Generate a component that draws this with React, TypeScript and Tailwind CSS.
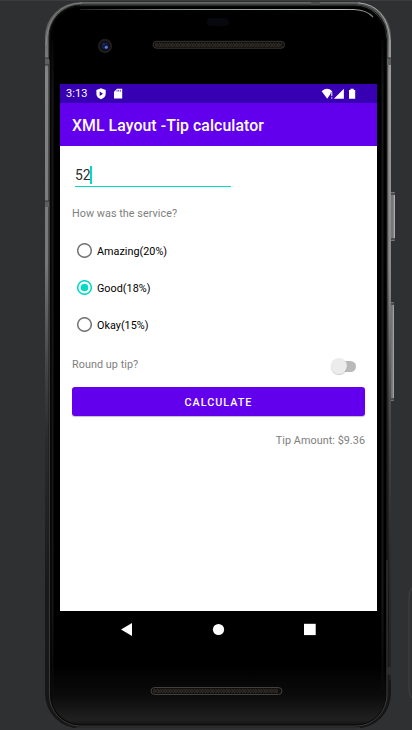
import React from "react";

function DeviceFrame() {
  return (
    <svg className="absolute inset-0" width="412" height="730" viewBox="0 0 412 730" fill="none" aria-hidden="true">
      <defs>
        <linearGradient id="rim" x1="0" y1="0" x2="0" y2="730" gradientUnits="userSpaceOnUse">
          <stop offset="0" stopColor="#4c4e4c" />
          <stop offset="0.1" stopColor="#858585" />
          <stop offset="0.36" stopColor="#777" />
          <stop offset="0.5" stopColor="#454545" />
          <stop offset="0.6" stopColor="#2b2b2b" />
          <stop offset="0.8" stopColor="#191919" />
          <stop offset="1" stopColor="#161616" />
        </linearGradient>
        <linearGradient id="rimRight" x1="0" y1="0" x2="0" y2="730" gradientUnits="userSpaceOnUse">
          <stop offset="0.06" stopColor="#a3a5a3" />
          <stop offset="0.4" stopColor="#8d8d8d" />
          <stop offset="0.55" stopColor="#555" />
          <stop offset="0.75" stopColor="#303030" />
          <stop offset="1" stopColor="#222" />
        </linearGradient>
        <linearGradient id="glass" x1="0" y1="665" x2="0" y2="726" gradientUnits="userSpaceOnUse">
          <stop offset="0" stopColor="#000" />
          <stop offset="0.5" stopColor="#0b0b0b" />
          <stop offset="0.9" stopColor="#202020" />
          <stop offset="1" stopColor="#101010" />
        </linearGradient>
        <linearGradient id="bezel" x1="0" y1="20" x2="0" y2="710" gradientUnits="userSpaceOnUse">
          <stop offset="0" stopColor="#161616" stopOpacity="0" />
          <stop offset="0.1" stopColor="#171717" />
          <stop offset="0.85" stopColor="#171717" />
          <stop offset="1" stopColor="#171717" stopOpacity="0" />
        </linearGradient>
        <linearGradient id="shine" x1="80" y1="0" x2="373" y2="0" gradientUnits="userSpaceOnUse">
          <stop offset="0" stopColor="#222" />
          <stop offset="0.3" stopColor="#7e8583" />
          <stop offset="0.9" stopColor="#b4bab8" />
          <stop offset="1" stopColor="#777" />
        </linearGradient>
        <pattern id="mesh" x="0" y="42" width="5.3" height="6" patternUnits="userSpaceOnUse">
          <path d="M0 1l2.6 2L0 5M2.6 1l2.7 2-2.7 2" stroke="#332f2a" strokeWidth="1" />
        </pattern>
      </defs>
      <path d="M0 .5h412" stroke="#3b3c3e" />
      <rect x="390" y="192" width="5" height="49" rx="1" fill="#777" />
      <path d="M394.3 195v43" stroke="#bbb" />
      <path d="M391 194h4M391 239h4" stroke="#252525" />
      <rect x="390" y="302" width="4" height="99" rx="1" fill="#747474" />
      <path d="M393.3 305v93" stroke="#aaa" />
      <path d="M391 304h3M391 399h3" stroke="#252525" />
      <rect x="45" y="2" width="346" height="726.5" rx="35" fill="url(#rim)" />
      <path d="M390 40v640" stroke="url(#rimRight)" strokeWidth="1.5" />
      <path d="M358 2.8Q387 5 390 40" stroke="#a3a5a3" strokeWidth="1" />
      <path d="M80 2.8H358" stroke="#737674" strokeWidth=".8" />
      <path d="M46 46Q47 4 82 3" stroke="#8b8e8c" strokeWidth=".8" />
      <rect x="49" y="5" width="338" height="721.5" rx="32" fill="#070707" stroke="#1b1b1b" />
      <path d="M80 5H355Q381 6 387 38" stroke="#3b3e3c" strokeWidth="1" />
      <rect x="51" y="7" width="335" height="717.5" rx="30" fill="url(#glass)" />
      <path d="M52.5 40v650M382.5 40v650" stroke="url(#bezel)" strokeWidth="2" />
      <path d="M80 9.5H354Q367 10 373 17" stroke="url(#shine)" strokeWidth="1.2" />
      <path d="M49.5 60v634A31 31 0 0 0 80 726H356A31 31 0 0 0 387 694V560" stroke="#4b4b4b" strokeWidth=".7" />
      <path d="M76 728H360" stroke="#3f3f3f" strokeWidth="1" />
      <path d="M45 58h4v7h-4zM387 58h4v7h-4zM45 201h4v6h-4z" fill="#5e6060" />
      <path d="M387 667h4v8h-4z" fill="#2e2e2e" />
      <path d="M45 58h4M45 65h4M387 58h4M45 201h5M387 667h4M387 675h4" stroke="#252525" strokeWidth=".8" />
      <path d="M311 2h9v3h-9z" fill="#494b4a" />
      <rect x="207" y="18" width="22" height="8" rx="4" fill="#07080d" />
      <circle cx="105" cy="46" r="7.2" fill="#1d1d1d" />
      <circle cx="105" cy="46" r="5.1" fill="#0d0d12" />
      <circle cx="105" cy="46" r="3.6" fill="#131c42" />
      <circle cx="106.3" cy="47.3" r="1.5" fill="#6679db" />
      <circle cx="103.8" cy="43.7" r=".8" fill="#263e86" />
      <rect x="153" y="41.3" width="131.5" height="7" rx="3.5" fill="#110f0d" stroke="#403e39" strokeWidth=".8" />
      <rect x="155" y="42" width="127" height="6" fill="url(#mesh)" />
      <rect x="151" y="687.5" width="131" height="7" rx="3.5" fill="#100e0c" stroke="#504e4c" strokeWidth=".8" />
      <rect x="155" y="42" width="125" height="6" fill="url(#mesh)" transform="translate(-2 646)" />
      <path d="M412 588q-3 3-3 8v93q0 6 3 9" stroke="#404143" />
    </svg>
  );
}

function StatusBar() {
  return (
    <div className="flex h-[19px] items-center bg-[#3700b3] pl-[6px] text-white">
      <span className="w-[30px] pt-px text-[11px] leading-[18px] tracking-[0.1px]">3:13</span>
      <svg width="28" height="12" viewBox="0 0 28 12" aria-hidden="true">
        <path d="M5 .2 9.7 2V6Q9.4 9.8 5 11.2.6 9.8.4 6V2Z" fill="white" />
        <path d="M3.7 3.5v4.4L7 5.7Z" fill="#3700b3" />
        <path d="M21 .7h5.2v9.8H18V3.8Z" fill="white" />
        <path d="M21 1.8v1.9M22.7 1.8v1.9M24.4 1.8v1.9" stroke="#3700b3" strokeWidth=".7" />
      </svg>
      <svg className="mr-[20px] ml-auto" width="36" height="12" viewBox="0 0 36 12" aria-hidden="true">
        <path d="M.7 3.2Q6 -1.7 11.3 3.2L6.2 10.7Z" fill="white" />
        <path d="M9.8 4h1.9v7H9.8z" fill="#3700b3" />
        <path d="M10.8 4.2v4M10.8 9.3v1.3" stroke="white" />
        <path d="M22.9 .8v10H12.9Z" fill="white" />
        <path d="M28 1.9h1.5V.8h3.2v1.1h1.5v8.9H28Z" fill="white" />
      </svg>
    </div>
  );
}

function RadioOption({ label, checked = false }: { label: string; checked?: boolean }) {
  return (
    <div className="flex h-[37px] items-center pl-[5px] text-[10.8px]">
      <svg className="mr-[5px] shrink-0" width="15" height="15" viewBox="0 0 15 15" aria-hidden="true">
        <circle cx="7.5" cy="7.5" r="6.8" fill="none" stroke={checked ? "#03dac5" : "#757575"} strokeWidth="1.5" />
        {checked && <circle cx="7.5" cy="7.5" r="3.8" fill="#03dac5" />}
      </svg>
      <span className="pt-[2px] leading-[16px] tracking-[0.02px] text-black">{label}</span>
    </div>
  );
}

export default function App() {
  return (
    <div className="relative h-[730px] w-[412px] overflow-hidden bg-[#2f3032] pt-[84px] pl-[60px] font-['Roboto',sans-serif]">
      <DeviceFrame />
      <div className="relative flex w-[317px] flex-col">
        <StatusBar />
        <header className="flex h-[43px] items-center bg-[#6200ee] pt-[2px] pl-3 text-[15.8px] leading-[18px] font-medium tracking-[0.09px] text-white">
          XML Layout -Tip calculator
        </header>
        <main className="flex h-[465px] flex-col bg-white px-3 pt-[19px]">
          <div className="ml-[3px] flex h-[22px] w-[156px] items-start border-b border-[#03dac5] text-[13.9px] leading-[21px] text-[#303030]">
            <span className="tracking-[-0.1px]">52</span>
            <span className="mt-px h-[18px] w-[2px] bg-[#03dac5]" />
          </div>
          <p className="mt-[19px] h-[16px] text-[10.8px] leading-[16px] tracking-[0.05px] text-[#7e7e7e]">How was the service?</p>
          <div className="mt-[10px] flex flex-col">
            <RadioOption label="Amazing(20%)" />
            <RadioOption label="Good(18%)" checked />
            <RadioOption label="Okay(15%)" />
          </div>
          <div className="mt-[10px] flex h-[26px] items-center justify-between text-[10.8px] text-[#7e7e7e]">
            <span className="pb-px tracking-[0.05px]">Round up tip?</span>
            <div className="mr-[9px] flex h-[11px] w-[20px] items-center rounded-full bg-[#b9b9b9]">
              <span className="-ml-[5px] size-[16px] shrink-0 rounded-full bg-[#ececec] shadow-[0_1px_1px_rgba(0,0,0,0.2)]" />
            </div>
          </div>
          <button className="mt-[8px] h-[29px] shrink-0 rounded-[3px] bg-[#6200ee] pt-[3px] text-[10.8px] font-medium tracking-[1px] text-white shadow-[0_1px_1px_rgba(0,0,0,0.25)]">
            CALCULATE
          </button>
          <p className="mt-[17px] text-right text-[10.8px] leading-[16px] tracking-[0.05px] text-[#7e7e7e]">Tip Amount: $9.36</p>
        </main>
        <nav className="flex h-[37px] items-center bg-black pl-[61px]">
          <svg width="195" height="14" viewBox="0 0 195 14" fill="white" aria-hidden="true">
            <path d="M0 6.5 11 0v13Z" />
            <circle cx="97.5" cy="6.5" r="5.6" />
            <rect x="183" y="0.8" width="11.7" height="11.3" />
          </svg>
        </nav>
      </div>
    </div>
  );
}
